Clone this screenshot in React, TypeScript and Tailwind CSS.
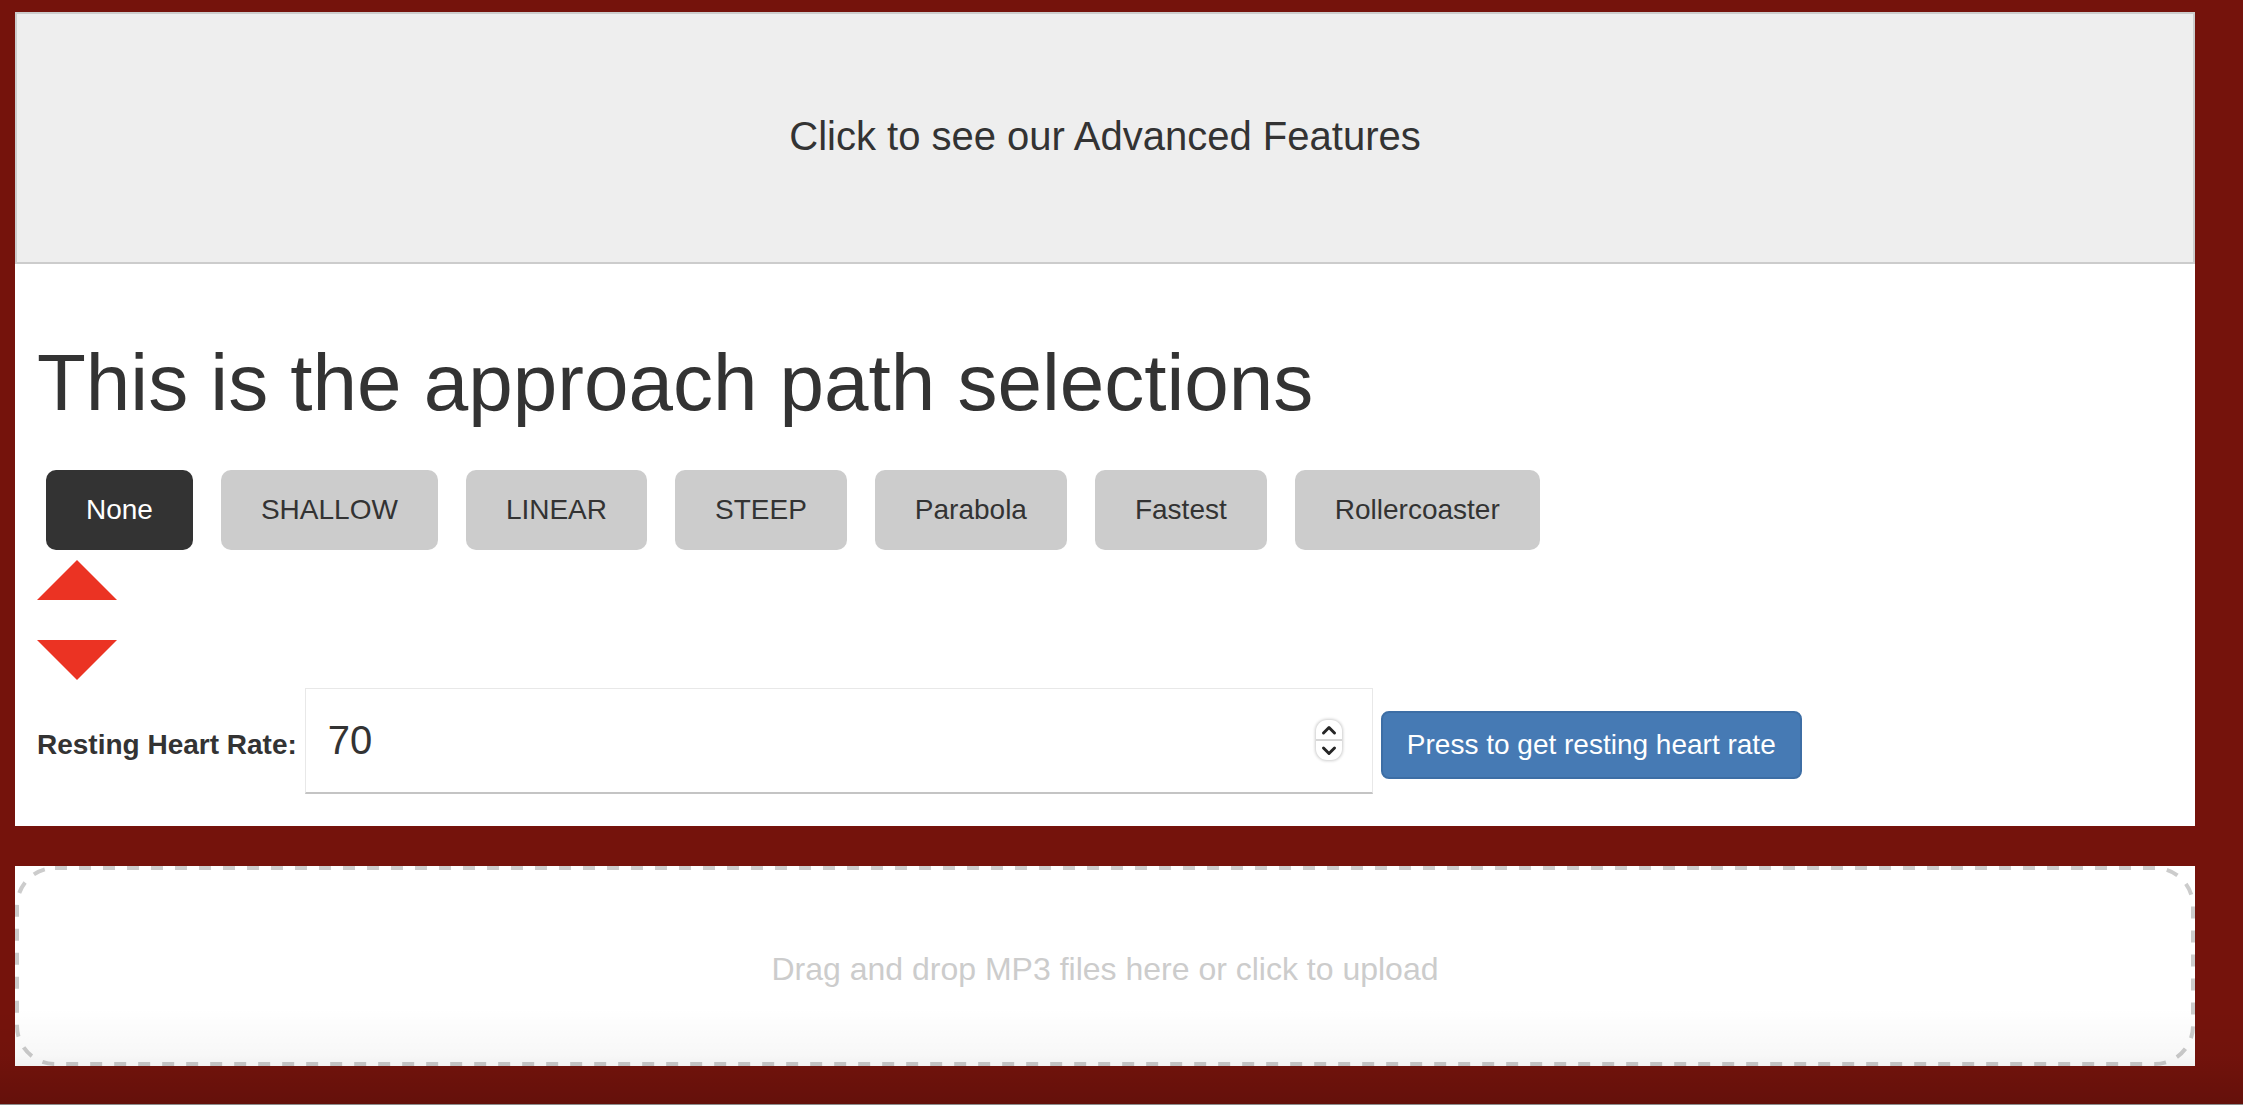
import { useRef, useState } from "react";

const paths = ["None", "SHALLOW", "LINEAR", "STEEP", "Parabola", "Fastest", "Rollercoaster"];

export default function App() {
  const [selected, setSelected] = useState("None");
  const [rate, setRate] = useState(70);
  const files = useRef<HTMLInputElement>(null);

  return (
    <div className="relative flex min-h-screen flex-col border-b border-[#8c8c8c] bg-[#75130c] pt-3 pr-12 pb-[38px] pl-[15px] font-['Liberation_Sans',Arial,sans-serif] text-[28px] leading-10 text-[#333]">
      <main className="flex flex-col gap-10">
        <div className="bg-white">
          <button
            type="button"
            className="block w-full border-2 border-[#ccc] bg-[#eee] pt-[98px] pb-[102px] text-center text-[40px] leading-[48px]"
          >
            Click to see our Advanced Features
          </button>

          <section className="px-[22px] pt-[75px] pb-8">
            <h1 className="text-[80px] leading-[88px] font-normal">This is the approach path selections</h1>

            <div className="mt-[43px] flex flex-wrap gap-7 px-[9px]">
              {paths.map((name) => (
                <button
                  key={name}
                  type="button"
                  aria-pressed={selected === name}
                  onClick={() => setSelected(name)}
                  className={
                    selected === name
                      ? "rounded-[10px] bg-[#333] px-10 py-5 text-white"
                      : "rounded-[10px] bg-[#ccc] px-10 py-5"
                  }
                >
                  {name}
                </button>
              ))}
            </div>

            <div className="mt-[10px] flex flex-col items-start gap-10">
              <button type="button" aria-label="Increase">
                <svg className="block h-10 w-20" viewBox="0 0 80 40" fill="#eb3323">
                  <path d="M40 0 80 40H0Z" />
                </svg>
              </button>
              <button type="button" aria-label="Decrease">
                <svg className="block h-10 w-20" viewBox="0 0 80 40" fill="#eb3323">
                  <path d="M0 0H80L40 40Z" />
                </svg>
              </button>
            </div>

            <div className="mt-2 flex items-baseline gap-2">
              <label htmlFor="rate" className="font-bold">
                Resting Heart Rate:
              </label>
              <div className="relative w-1/2">
                <input
                  id="rate"
                  type="number"
                  value={rate}
                  onChange={(e) => setRate(Number(e.target.value))}
                  className="block h-[106px] w-full appearance-none border border-b-2 border-[#e8e8e8] border-b-[#c4c4c4] bg-white px-[22px] text-[40px] leading-[48px] [appearance:textfield]"
                />
                <div className="absolute top-8 right-[31px] flex h-10 w-[26px] flex-col divide-y-2 divide-[#d6d6d6] overflow-hidden rounded-[11px] bg-white shadow-[0_0_3px_1px_rgba(0,0,0,0.2)]">
                  <button
                    type="button"
                    aria-label="Step up"
                    onClick={() => setRate(rate + 1)}
                    className="flex flex-1 items-center justify-center"
                  >
                    <svg className="h-3 w-4" viewBox="0 0 16 12" fill="none" stroke="#262626" strokeWidth="3" strokeLinecap="round" strokeLinejoin="round">
                      <path d="M2.5 9 8 3.5 13.5 9" />
                    </svg>
                  </button>
                  <button
                    type="button"
                    aria-label="Step down"
                    onClick={() => setRate(rate - 1)}
                    className="flex flex-1 items-center justify-center"
                  >
                    <svg className="h-3 w-4" viewBox="0 0 16 12" fill="none" stroke="#262626" strokeWidth="3" strokeLinecap="round" strokeLinejoin="round">
                      <path d="M2.5 3 8 8.5 13.5 3" />
                    </svg>
                  </button>
                </div>
              </div>
              <button
                type="button"
                className="rounded-lg border-2 border-[#3d6ea5] bg-[#467ab4] px-6 py-3 text-white"
              >
                Press to get resting heart rate
              </button>
            </div>
          </section>
        </div>

        <div className="relative bg-white">
          <svg className="pointer-events-none absolute inset-0 size-full" fill="none" aria-hidden="true">
            <rect
              x="2"
              y="2"
              rx="38"
              className="h-[calc(100%-4px)] w-[calc(100%-4px)]"
              stroke="#ccc"
              strokeWidth="4"
              strokeDasharray="12 12"
            />
          </svg>
          <button
            type="button"
            onClick={() => files.current?.click()}
            className="block h-[200px] w-full rounded-[40px] pt-[6px] text-center text-[32px] text-[#ccc]"
          >
            Drag and drop MP3 files here or click to upload
          </button>
          <input ref={files} type="file" accept=".mp3" multiple aria-label="MP3 files" className="hidden" />
        </div>
      </main>
      <div className="pointer-events-none absolute inset-x-0 bottom-0 h-24 bg-linear-to-b from-transparent via-black/3 to-black/14" />
    </div>
  );
}
